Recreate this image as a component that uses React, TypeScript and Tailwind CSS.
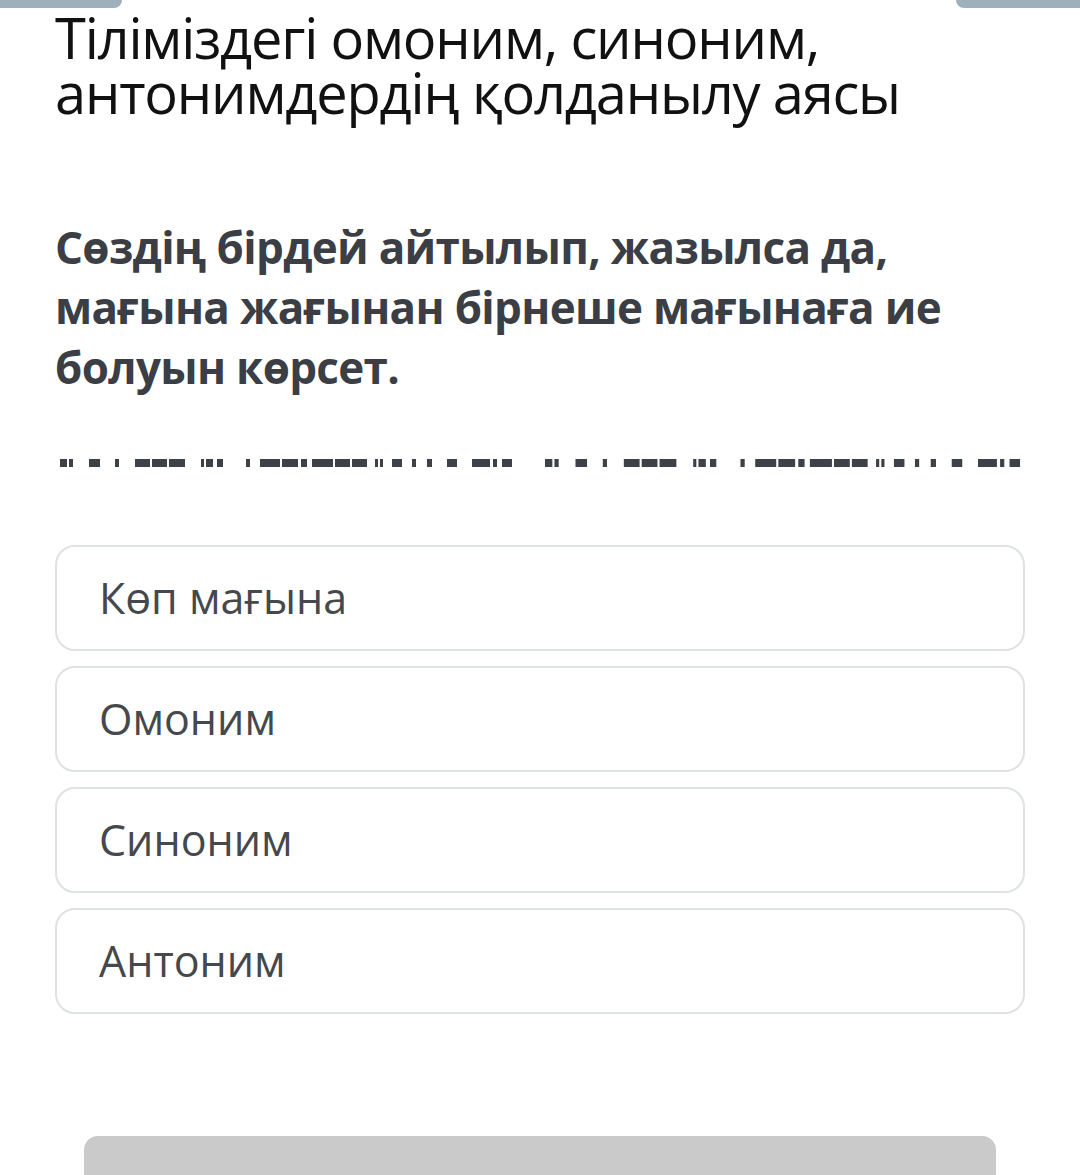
import React from "react";

const segs: [number, number][] = [
  [60, 67], [69, 73], [89, 100], [115, 119], [135, 150], [152, 167], [169, 185],
  [201, 204], [206, 213], [217, 223], [246, 250], [260, 280], [282, 298], [301, 307],
  [312, 333], [335, 350], [352, 367], [375, 378], [380, 383], [392, 402], [412, 416],
  [427, 432], [447, 457], [472, 490], [493, 497], [502, 512],
];

function Dashes() {
  const g2 = segs.map(
    ([a, b]) => [545 + (a - 60) * 1.051, 545 + (b - 60) * 1.051] as [number, number]
  );
  const all = [...segs, ...g2];
  return (
    <svg width="1080" height="12" viewBox="0 0 1080 12" className="block">
      {all.map(([a, b], i) => (
        <rect key={i} x={a} y={2} width={b - a} height={8} fill="#3d4148" />
      ))}
    </svg>
  );
}

const options = ["Көп мағына", "Омоним", "Синоним", "Антоним"];

export default function App() {
  return (
    <div
      className="relative w-[1080px] h-[1175px] overflow-hidden bg-white"
      style={{ fontFamily: '"Open Sans", "Noto Sans", sans-serif' }}
    >
      <div className="absolute left-0 top-0 w-[122px] h-[8px] bg-[#9fb0bd] rounded-br-[14px]" />
      <div className="absolute right-0 top-0 w-[124px] h-[8px] bg-[#9fb0bd] rounded-bl-[14px]" />

      <div className="pl-[55px] pr-[55px] pt-[10px]">
        <h1 className="text-[56px] leading-[55px] text-[#111111] font-normal tracking-[-1.2px]">
          Тіліміздегі омоним, синоним,
          <br />
          антонимдердің қолданылу аясы
        </h1>
        <p className="mt-[97px] text-[44px] leading-[60px] font-bold text-[#3b3f45] tracking-[-0.7px]">
          Сөздің бірдей айтылып, жазылса да,
          <br />
          мағына жағынан бірнеше мағынаға ие
          <br />
          болуын көрсет.
        </p>
      </div>

      <div className="mt-[60px]">
        <Dashes />
      </div>

      <div className="mt-[76px] px-[55px] flex flex-col gap-[15px]">
        {options.map((o) => (
          <div
            key={o}
            className="h-[106px] rounded-[20px] border-2 border-[#dfe2e2] flex items-center pl-[42px] text-[43px] text-[#45484c]"
          >
            {o}
          </div>
        ))}
      </div>

      <div className="mt-[122px] mx-[84px] h-[60px] bg-[#cacaca] rounded-t-[14px]" />
    </div>
  );
}
